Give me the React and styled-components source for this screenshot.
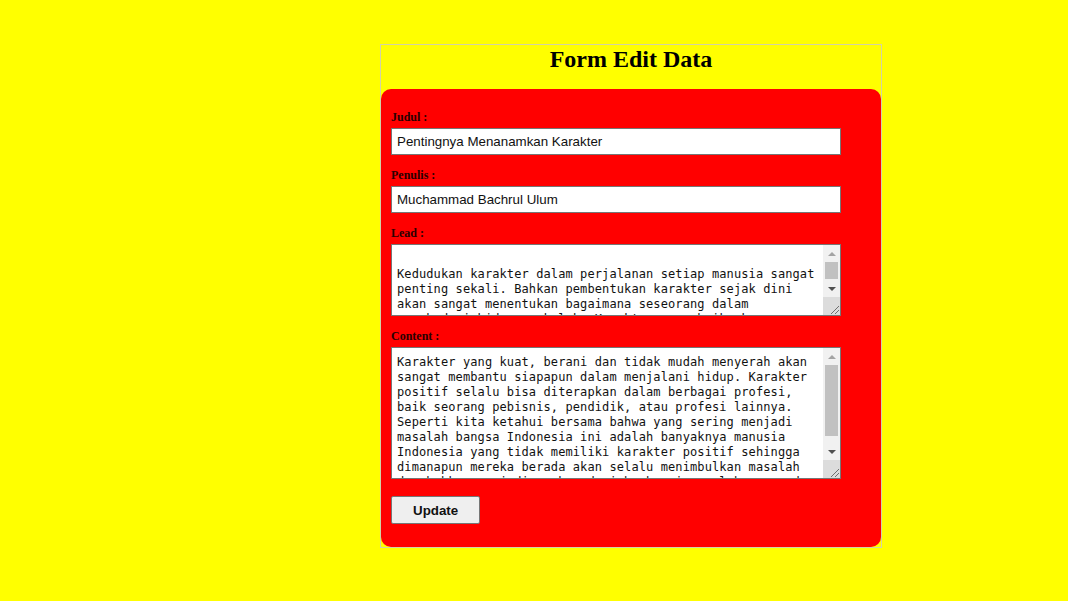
import styled, { createGlobalStyle } from "styled-components";

const GlobalStyle = createGlobalStyle`
  html, body {
    margin: 0;
    padding: 0;
    background: #ffff00;
  }
  body {
    font-family: "Liberation Serif", "Times New Roman", serif;
  }
`;

const Page = styled.div`
  min-height: 601px;
  padding: 44px 0 0 380px;
  box-sizing: border-box;
`;

const Card = styled.div`
  width: 500px;
  border: 1px solid #d2d2a6;
`;

const Title = styled.h2`
  margin: 0 0 16px;
  font-size: 24px;
  line-height: 28px;
  font-weight: bold;
  text-align: center;
  color: #000;
`;

const Form = styled.form`
  display: flex;
  flex-direction: column;
  align-items: flex-start;
  background: #ff0000;
  border-radius: 10px;
  padding: 21px 10px 23px;
`;

const Field = styled.div`
  display: flex;
  flex-direction: column;
  margin-bottom: ${(p) => (p.last ? "17px" : "13px")};
`;

const Label = styled.label`
  font-size: 12px;
  line-height: 14px;
  font-weight: bold;
  color: #2a0000;
  margin-bottom: 4px;
`;

const Input = styled.input`
  box-sizing: border-box;
  width: 450px;
  height: 27px;
  padding: 0 5px;
  border: 1px solid #767676;
  background: #fff;
  font-family: "Liberation Sans", Arial, sans-serif;
  font-size: 13.333px;
  color: #111;
  outline: none;
`;

const TextBox = styled.div`
  box-sizing: border-box;
  display: flex;
  width: 450px;
  height: ${(p) => p.h}px;
  border: 1px solid #767676;
  background: #fff;
`;

const TextArea = styled.textarea`
  flex: 1;
  min-width: 0;
  box-sizing: border-box;
  height: 100%;
  margin: 0;
  padding: 7px 5px 5px;
  border: none;
  background: transparent;
  font-family: "DejaVu Sans Mono", "Liberation Mono", monospace;
  font-size: 12px;
  line-height: 15px;
  letter-spacing: 0.1px;
  color: #111;
  overflow: hidden;
  resize: none;
  outline: none;
`;

// windows style scrollbar next to the textarea
const ScrollBar = styled.div`
  width: 17px;
  display: flex;
  flex-direction: column;
  background: #f1f1f1;
`;

const ArrowButton = styled.div`
  height: 17px;
  flex: none;
  display: flex;
  align-items: center;
  justify-content: center;

  &::before {
    content: "";
    border-left: 4px solid transparent;
    border-right: 4px solid transparent;
    ${(p) =>
      p.down
        ? "border-top: 4px solid #505050;"
        : "border-bottom: 4px solid #a3a3a3;"}
  }
`;

const Track = styled.div`
  flex: 1;
  padding: 0 2px;
`;

const Thumb = styled.div`
  height: ${(p) => p.h}px;
  background: #c1c1c1;
`;

const Grip = styled.div`
  height: 18px;
  flex: none;
  background: #dcdcdc;
  display: flex;
  align-items: flex-end;
  justify-content: flex-end;
`;

const ScrollTextArea = ({ h, thumb, value }) => (
  <TextBox h={h}>
    <TextArea defaultValue={value} />
    <ScrollBar>
      <ArrowButton />
      <Track>
        <Thumb h={thumb} />
      </Track>
      <ArrowButton down />
      <Grip>
        <svg width="12" height="12" viewBox="0 0 12 12">
          <path d="M11 3 L3 11 M11 7 L7 11" stroke="#6e6e6e" strokeWidth="1" fill="none" />
        </svg>
      </Grip>
    </ScrollBar>
  </TextBox>
);

const Button = styled.button`
  height: 28px;
  padding: 0 21px;
  border: 1px solid #767676;
  border-radius: 2px;
  background: #efefef;
  font-family: "Liberation Sans", Arial, sans-serif;
  font-size: 13.333px;
  font-weight: bold;
  color: #111;
  cursor: pointer;
`;

const lead =
  "\nKedudukan karakter dalam perjalanan setiap manusia sangat penting sekali. Bahkan pembentukan karakter sejak dini akan sangat menentukan bagaimana seseorang dalam menghadapi hidupnya kelak. Karakter yang baik akan membawa seseorang menuju keberhasilan.";

const content =
  "Karakter yang kuat, berani dan tidak mudah menyerah akan sangat membantu siapapun dalam menjalani hidup. Karakter positif selalu bisa diterapkan dalam berbagai profesi, baik seorang pebisnis, pendidik, atau profesi lainnya. Seperti kita ketahui bersama bahwa yang sering menjadi masalah bangsa Indonesia ini adalah banyaknya manusia Indonesia yang tidak memiliki karakter positif sehingga dimanapun mereka berada akan selalu menimbulkan masalah dan bahkan menjadi sumber dari berbagai masalah yang ada. Oleh karena itu, pendidikan karakter harus ditanamkan sejak dini.";

const App = () => {
  return (
    <Page>
      <GlobalStyle />
      <Card>
        <Title>Form Edit Data</Title>
        <Form onSubmit={(e) => e.preventDefault()}>
          <Field>
            <Label>Judul :</Label>
            <Input defaultValue="Pentingnya Menanamkan Karakter" />
          </Field>
          <Field>
            <Label>Penulis :</Label>
            <Input defaultValue="Muchammad Bachrul Ulum" />
          </Field>
          <Field>
            <Label>Lead :</Label>
            <ScrollTextArea h={72} thumb={17} value={lead} />
          </Field>
          <Field last>
            <Label>Content :</Label>
            <ScrollTextArea h={132} thumb={71} value={content} />
          </Field>
          <Button type="submit">Update</Button>
        </Form>
      </Card>
    </Page>
  );
};

export default App;
